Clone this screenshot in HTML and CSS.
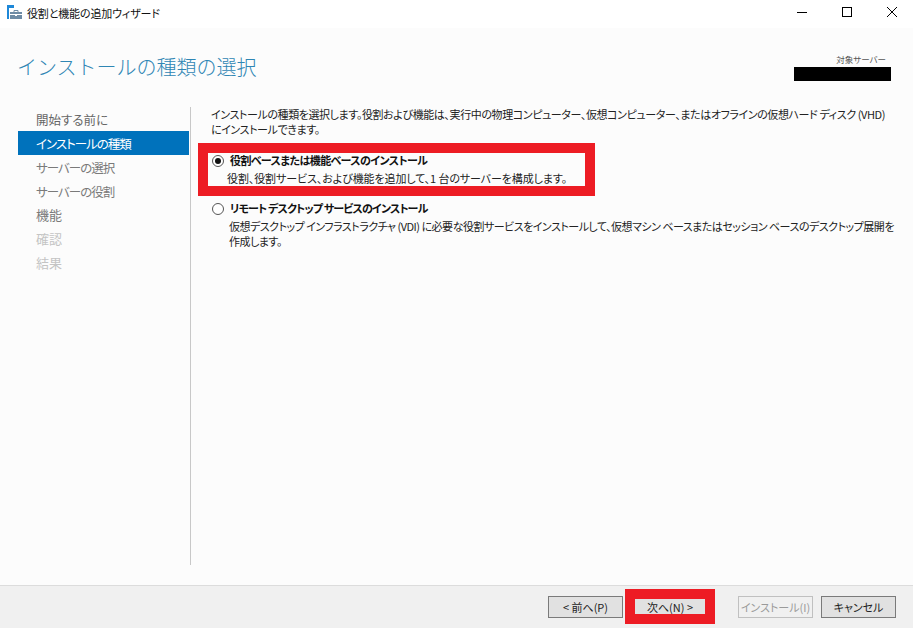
FILE: index.html
```html
<!DOCTYPE html>
<html lang="ja">
<head>
<meta charset="utf-8">
<title>役割と機能の追加ウィザード</title>
<link rel="stylesheet" href="styles.css">
</head>
<body>
<div class="window">
  <div class="titlebar">
    <svg class="app-icon" width="15" height="14" viewBox="0 0 15 14">
      <rect x="0" y="0" width="7" height="3" fill="#1e88d8"/>
      <rect x="0" y="3" width="2" height="11" fill="#1e88d8"/>
      <rect x="3" y="7" width="12" height="7" fill="#6d8ba5"/>
      <path d="M7 7V5.5H11V7" fill="none" stroke="#6d8ba5"/>
      <rect x="3" y="9" width="12" height="1" fill="#ffffff"/>
      <rect x="8" y="9" width="2" height="2" fill="#ffffff"/>
    </svg>
    <span class="title">役割と機能の追加ウィザード</span>
    <div class="controls">
      <svg width="12" height="12" viewBox="0 0 12 12"><path d="M1 6.5H11" stroke="#000" fill="none"/></svg>
      <svg width="12" height="12" viewBox="0 0 12 12"><rect x="1.5" y="1.5" width="9" height="9" stroke="#000" fill="none"/></svg>
      <svg width="12" height="12" viewBox="0 0 12 12"><path d="M1 1L11 11M11 1L1 11" stroke="#000" fill="none"/></svg>
    </div>
  </div>
  <header class="header">
    <h1 class="heading">インストールの種類の選択</h1>
    <div class="target">
      <div class="target-label">対象サーバー</div>
      <div class="target-name"></div>
    </div>
  </header>
  <div class="main">
    <nav class="nav">
      <div class="nav-item">開始する前に</div>
      <div class="nav-item active tight">インストールの種類</div>
      <div class="nav-item tight">サーバーの選択</div>
      <div class="nav-item tight">サーバーの役割</div>
      <div class="nav-item wide">機能</div>
      <div class="nav-item disabled wide">確認</div>
      <div class="nav-item disabled wide">結果</div>
    </nav>
    <section class="content">
      <p class="intro">インストールの種類を選択します。役割および機能は、実行中の物理コンピューター、仮想コンピューター、またはオフラインの仮想ハード ディスク (VHD) にインストールできます。</p>
      <div class="option first">
        <span class="radio checked"></span>
        <div class="option-text">
          <div class="option-title">役割ベースまたは機能ベースのインストール</div>
          <div class="option-desc short">役割、役割サービス、および機能を追加して、1 台のサーバーを構成します。</div>
        </div>
      </div>
      <div class="option">
        <span class="radio"></span>
        <div class="option-text">
          <div class="option-title spaced">リモート デスクトップ サービスのインストール</div>
          <div class="option-desc">仮想デスクトップ インフラストラクチャ (VDI) に必要な役割サービスをインストールして、仮想マシン ベースまたはセッション ベースのデスクトップ展開を作成します。</div>
        </div>
      </div>
    </section>
  </div>
  <footer class="footer">
    <button class="btn">&lt; 前へ(P)</button>
    <button class="btn next">次へ(N) &gt;</button>
    <button class="btn install" disabled>インストール(I)</button>
    <button class="btn">キャンセル</button>
  </footer>
  <div class="mark mark-option"></div>
  <div class="mark mark-next"></div>
</div>
</body>
</html>
```
FILE: styles.css
```css
* { box-sizing: border-box; }
html, body { margin: 0; padding: 0; background: #fcfcfc; }
.window {
  position: relative;
  width: 913px;
  height: 628px;
  overflow: hidden;
  display: flex;
  flex-direction: column;
  font-family: "Noto Sans CJK JP", "Noto Sans", sans-serif;
  font-feature-settings: "palt";
  font-size: 11px;
  color: #222;
}
.titlebar {
  height: 28px;
  flex: none;
  background: #fff;
  display: flex;
  align-items: center;
  padding-left: 7px;
}
.app-icon { flex: none; margin-top: -4px; }
.title { margin-left: 5px; margin-top: -3px; font-size: 11px; letter-spacing: -0.15px; line-height: 16px; color: #111; }
.controls {
  margin-left: auto;
  display: flex;
  gap: 33px;
  padding-right: 15px;
  margin-top: -4px;
}
.header {
  height: 79px;
  flex: none;
  display: flex;
  justify-content: space-between;
  padding: 23px 22px 0 17px;
}
.heading {
  margin: 0;
  font-size: 20px;
  font-weight: 300;
  line-height: 32px;
  font-feature-settings: normal;
  color: #2f86b4;
}
.target { width: 97px; padding-top: 2px; }
.target-label {
  font-size: 8.5px;
  line-height: 12px;
  text-align: right;
  padding-right: 5px;
  color: #555;
}
.target-name { height: 14px; margin-top: 2px; background: #000; }
.main { flex: 1; display: flex; padding-left: 18px; min-height: 0; }
.nav {
  width: 173px;
  flex: none;
  height: 458px;
  padding-right: 1px;
  border-right: 1px solid #c8c8c8;
}
.nav-item {
  height: 24px;
  line-height: 25px;
  padding-left: 18px;
  font-size: 12.5px;
  color: #7a7a7a;
}
.nav-item:first-child { color: #666; }
.nav-item.active { background: #0072bc; color: #fff; }
.nav-item.disabled { color: #c4c4c4; }
.nav-item.tight { letter-spacing: -1px; }
.nav-item.wide { font-size: 13px; line-height: 23px; }
.content { flex: 1; padding: 0 18px 0 20px; }
.intro { margin: 0; line-height: 15px; font-size: 11px; letter-spacing: -0.4px; color: #222; width: 684px; }
.option { display: flex; padding-left: 1px; }
.option.first { margin-top: 15px; margin-bottom: 14px; }
.radio {
  flex: none;
  width: 12px;
  height: 12px;
  margin-top: 3px;
  border: 1px solid #555;
  border-radius: 50%;
  background: #fff;
  display: flex;
  align-items: center;
  justify-content: center;
}
.radio.checked::before {
  content: "";
  width: 6px;
  height: 6px;
  border-radius: 50%;
  background: #111;
}
.option-text { margin-left: 5px; }
.option-title { font-weight: 700; font-size: 11px; letter-spacing: -0.6px; line-height: 17px; color: #111; margin-left: 1px; }
.option-title.spaced { letter-spacing: -0.85px; }
.option-desc { font-size: 11px; letter-spacing: -0.5px; line-height: 15px; color: #222; margin-top: 2px; width: 668px; }
.option-desc.short { letter-spacing: -0.1px; margin-left: -2px; }
.footer {
  height: 43px;
  flex: none;
  background: #f0f0f0;
  border-top: 1px solid #dcdcdc;
  display: flex;
  align-items: flex-start;
  padding: 10px 0 0 548px;
}
.btn {
  width: 75px;
  height: 22px;
  padding: 0;
  border: 1px solid #7a7a7a;
  background: #e1e1e1;
  font-family: inherit;
  font-feature-settings: "palt";
  font-size: 11px;
  line-height: 18px;
  color: #222;
}
.btn.next { margin-left: 12px; width: 70px; border-color: #e1e1e1; }
.btn.install { margin-left: 33px; background: #f0f0f0; border-color: #c0c0c0; color: #9a9a9a; }
.btn:last-child { margin-left: 8px; }
.mark { position: absolute; border-style: solid; border-color: #ed1c24; }
.mark-option { left: 198px; top: 143px; width: 397px; height: 53px; border-width: 10px; }
.mark-next { left: 625px; top: 589px; width: 90px; height: 35px; border-width: 10px; }
```
